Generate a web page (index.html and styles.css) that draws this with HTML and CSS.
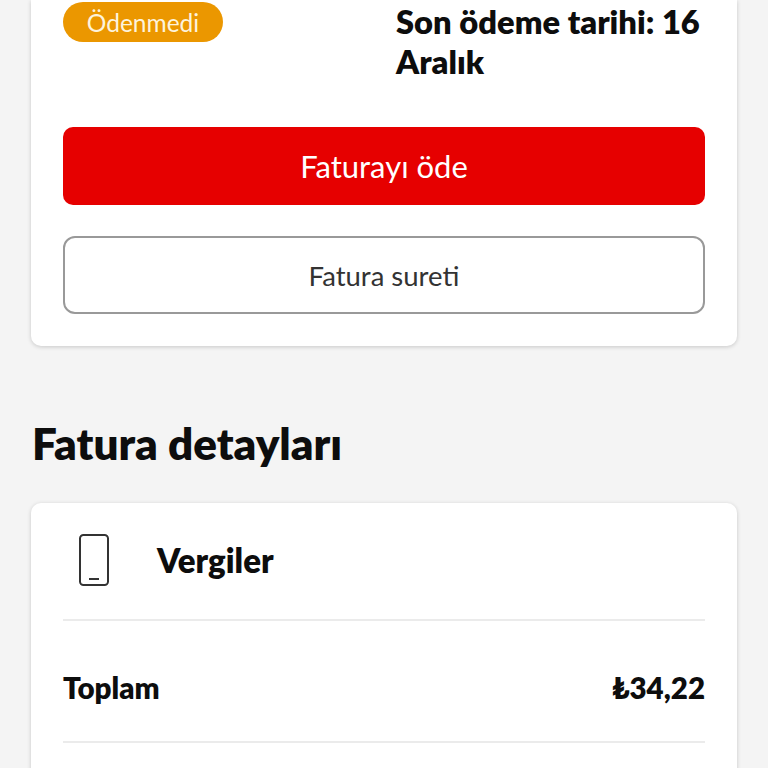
FILE: index.html
```html
<!DOCTYPE html>
<html lang="tr">
<head>
    <meta charset="UTF-8">
    <meta name="viewport" content="width=device-width, initial-scale=1.0">
    <title>Fatura</title>
    <link rel="stylesheet" href="styles.css">
</head>
<body>

<main class="page">
    <!-- Invoice summary -->
    <section class="card summary">
        <div class="summary-top">
            <span class="badge">Ödenmedi</span>
            <p class="due">Son ödeme tarihi: 16 Aralık</p>
        </div>
        <button class="btn btn-primary" type="button">Faturayı öde</button>
        <button class="btn btn-outline" type="button">Fatura sureti</button>
    </section>

    <h2 class="section-title">Fatura detayları</h2>

    <!-- Invoice details -->
    <section class="card details">
        <div class="details-head">
            <svg class="phone-icon" width="32" height="52" viewBox="0 0 32 52" fill="none" stroke="#333" stroke-width="2" aria-hidden="true">
                <rect x="2" y="1" width="28" height="50" rx="3.500"/>
                <path d="M11 45h10"/>
            </svg>
            <h3 class="details-name">Vergiler</h3>
        </div>
        <div class="details-row">
            <span>Toplam</span>
            <span>₺34,22</span>
        </div>
    </section>
</main>

</body>
</html>
```

FILE: styles.css
```css
html, body {
    height: 100%;
}

body {
    margin: 0;
    overflow: hidden;
    background-color: #f4f4f4;
    color: #0d0d0d;
    font-family: Lato, "Noto Sans", sans-serif;
    font-variant-ligatures: none;
}

.page {
    padding: 0 31px;
}

.card {
    background-color: white;
    box-shadow: 0 1px 4px rgba(0, 0, 0, 0.18);
}

.summary {
    padding: 2px 32px 32px;
    border-radius: 0 0 10px 10px;
}

.summary-top {
    display: grid;
    grid-template-columns: 333px 1fr;
    align-items: start;
    margin-bottom: 45px;
}

.badge {
    justify-self: start;
    width: 160px;
    height: 40px;
    line-height: 42px;
    text-align: center;
    border-radius: 20px;
    background-color: #eb9700;
    color: #fdf3dc;
    font-size: 24.5px;
}

.due {
    margin: 0;
    font-size: 32.700px;
    font-weight: 800;
    line-height: 40px;
}

.btn {
    display: block;
    width: 100%;
    font-family: inherit;
    cursor: pointer;
}

.btn-primary {
    height: 78px;
    margin-bottom: 31px;
    border: none;
    border-radius: 10px;
    background-color: #e60000;
    color: white;
    font-size: 31px;
}

.btn-outline {
    height: 78px;
    border: 2px solid #999;
    border-radius: 12px;
    background-color: white;
    color: #333;
    font-size: 27.500px;
}

.section-title {
    margin: 70px 0 33px 1px;
    font-size: 44px;
    font-weight: 800;
    line-height: 54px;
}

.details {
    padding: 0 32px 60px;
    border-radius: 10px;
}

.details-head {
    display: flex;
    align-items: center;
    gap: 47px;
    height: 114px;
    padding-left: 15px;
    padding-bottom: 2px;
    border-bottom: 2px solid #ebebeb;
}

.details-name {
    margin: 0;
    font-size: 33px;
    font-weight: 800;
}

.details-row {
    display: flex;
    justify-content: space-between;
    align-items: center;
    height: 108px;
    padding-top: 12px;
    border-bottom: 2px solid #ebebeb;
    font-size: 29.500px;
    font-weight: 800;
}
```
